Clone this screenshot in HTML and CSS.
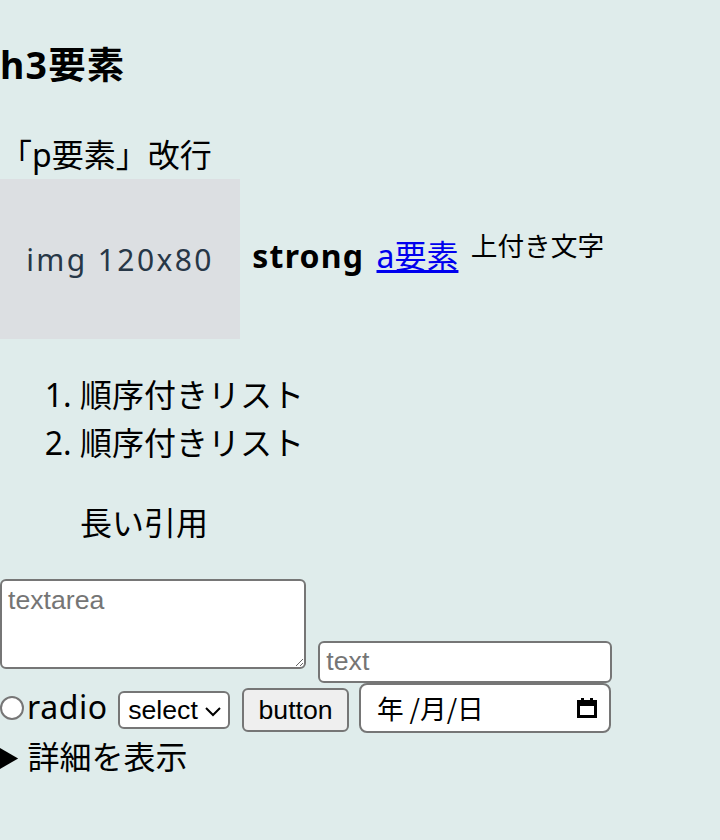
FILE: index.html
```html
<!DOCTYPE html>
<html lang="ja">

<head>
    <meta charset="UTF-8">
    <title>要素一覧</title>
    <link rel="stylesheet" href="styles.css">
</head>

<body>

    <h3>h3要素</h3>

    <p>「p要素」改行<br><span class="img">img 120x80</span> <strong>strong</strong> <a href="#">a要素</a> <sup>上付き文字</sup></p>

    <ol>
        <li>順序付きリスト</li>
        <li>順序付きリスト</li>
    </ol>

    <blockquote>長い引用</blockquote>

    <form class="controls">
        <textarea placeholder="textarea"></textarea>
        <input class="txt" type="text" placeholder="text">
        <label class="radio-label"><input class="radio" type="radio" name="r">radio</label>
        <span class="select-wrap">
            <select>
                <option>select</option>
            </select>
            <svg class="chev" width="9" height="6" viewBox="0 0 9 6"><path d="M1 1 L4.5 4.5 L8 1" fill="none" stroke="#000" stroke-width="1"/></svg>
        </span>
        <button type="button">button</button>
        <span class="date"><span class="date-text">年 /月/日</span><svg class="cal" width="10" height="10" viewBox="0 0 10 10"><rect x="0.75" y="1.75" width="8.5" height="7.5" fill="none" stroke="#000" stroke-width="1.5"/><rect x="0.75" y="1.5" width="8.5" height="2.5" fill="#000"/><rect x="2" y="0" width="1.5" height="2" fill="#000"/><rect x="6.5" y="0" width="1.5" height="2" fill="#000"/></svg></span>
    </form>

    <details>
        <summary>詳細を表示</summary>
    </details>

</body>

</html>
```

FILE: styles.css
```css
html {
    zoom: 2;
    background: #dfeceb;
}

body {
    margin: 0;
    font-family: "Noto Sans", "Noto Sans CJK JP", sans-serif;
    line-height: 1.5;
    color: #000;
}

h3 {
    font-size: 1.17em;
    margin: 1em 0;
    letter-spacing: 0.6px;
}

p {
    margin: 16px 0;
    word-spacing: 2px;
}

.img {
    display: inline-flex;
    align-items: center;
    justify-content: center;
    width: 120px;
    height: 80px;
    vertical-align: middle;
    background: #dcdfe2;
    color: #273747;
    font-family: "Noto Sans", sans-serif;
    font-size: 15px;
    letter-spacing: 1.2px;
    word-spacing: 0;
}

strong {
    letter-spacing: 0.6px;
}

a {
    color: #0000ee;
}

sup {
    font-size: 13.33px;
    line-height: 1;
}

ol {
    margin: 16px 0;
    padding-left: 40px;
}

blockquote {
    margin: 16px 40px;
}

/* フォーム部品 */
textarea,
input,
select,
button,
.date {
    font-family: "Liberation Sans", "Noto Sans CJK JP", sans-serif;
    font-size: 13.33px;
    box-sizing: border-box;
    margin: 0;
}

textarea {
    width: 153px;
    height: 45px;
    padding: 2px 3px;
    border: 1px solid #767676;
    border-radius: 3px;
    background: #fff;
    vertical-align: baseline;
}

.txt {
    width: 147px;
    height: 21px;
    padding: 1px 3px;
    margin-left: 2px;
    border: 1px solid #767676;
    border-radius: 3px;
    background: #fff;
    vertical-align: -0.5px;
}

textarea::placeholder,
.txt::placeholder {
    color: #757575;
}

.radio-label {
    white-space: nowrap;
    font-size: 16px;
    letter-spacing: 0.3px;
}

.radio {
    width: 12.5px;
    height: 12.5px;
    margin: 0 1px 0 0;
    vertical-align: -1px;
}

.select-wrap {
    position: relative;
    display: inline-flex;
    align-items: center;
    margin-left: 1px;
}

select {
    appearance: none;
    width: 56px;
    height: 19px;
    padding: 0 11px 0 4px;
    border: 1px solid #767676;
    border-radius: 3px;
    background: #fff;
    color: #000;
}

.chev {
    position: absolute;
    right: 4px;
    top: 50%;
    margin-top: -2px;
    pointer-events: none;
}

button {
    height: 22px;
    padding: 1px 7px;
    margin-left: 2px;
    border: 1px solid #767676;
    border-radius: 3px;
    background: #efefef;
    color: #000;
}

.date {
    display: inline-flex;
    align-items: center;
    justify-content: space-between;
    width: 126px;
    height: 25px;
    padding: 0 6px 0 8px;
    margin-left: 1px;
    border: 1px solid #767676;
    border-radius: 4px;
    background: #fff;
    line-height: 1;
}

.date-text {
    font-family: "Noto Sans CJK JP", sans-serif;
    white-space: pre;
}

details {
    margin: 0;
}
```
